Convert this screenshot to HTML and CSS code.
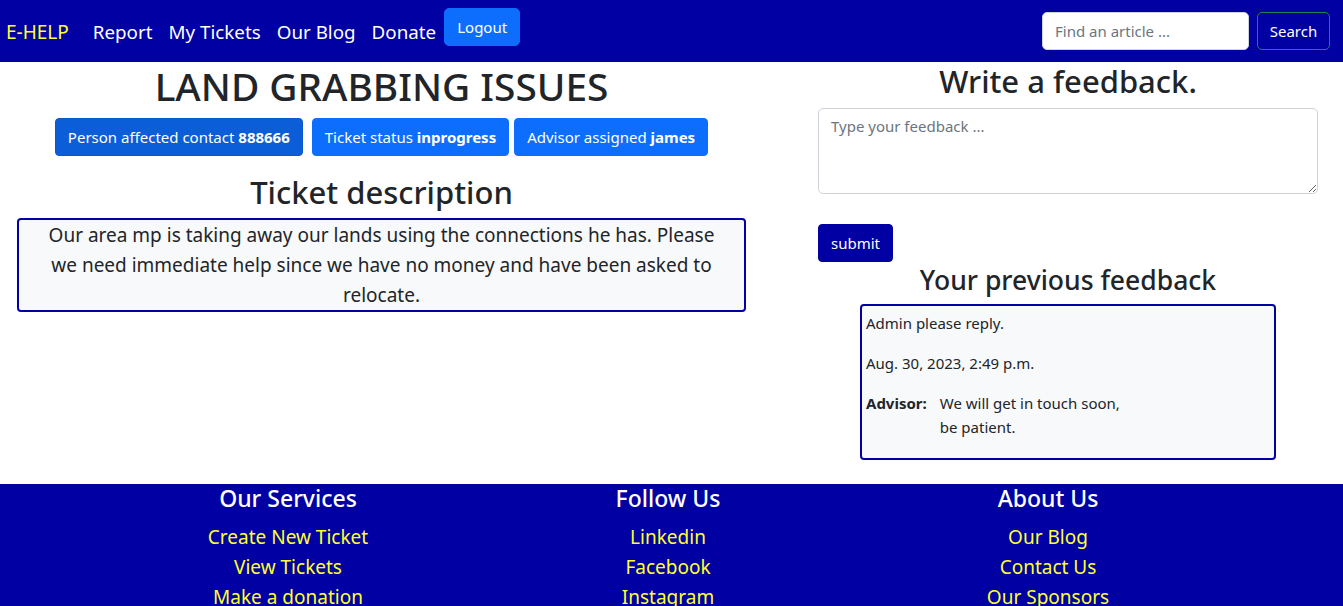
FILE: index.html
```html
<!DOCTYPE html>
<html lang="en">
<head>
<meta charset="utf-8">
<title>E-HELP - Ticket</title>
<link rel="stylesheet" href="styles.css">
</head>
<body>
<nav class="navbar">
  <a class="brand" href="#">E-HELP</a>
  <ul class="nav-links">
    <li><a href="#">Report</a></li>
    <li><a href="#">My Tickets</a></li>
    <li><a href="#">Our Blog</a></li>
    <li><a href="#">Donate</a></li>
  </ul>
  <button class="btn-logout" type="button">Logout</button>
  <form class="search">
    <input class="search-input" type="search" placeholder="Find an article ...">
    <button class="btn-search" type="button">Search</button>
  </form>
</nav>

<main class="main">
  <section class="ticket">
    <h1 class="ticket-title">LAND GRABBING ISSUES</h1>
    <div class="badges">
      <button class="badge badge-dark" type="button">Person affected contact <b>888666</b></button>
      <button class="badge badge-mid" type="button">Ticket status <b>inprogress</b></button>
      <button class="badge" type="button">Advisor assigned <b>james</b></button>
    </div>
    <h2 class="section-title desc-title">Ticket description</h2>
    <p class="description">Our area mp is taking away our lands using the connections he has. Please we need immediate help since we have no money and have been asked to relocate.</p>
  </section>

  <section class="feedback">
    <h2 class="section-title">Write a feedback.</h2>
    <form class="feedback-form">
      <textarea class="feedback-input" rows="3" placeholder="Type your feedback ..."></textarea>
      <button class="btn-submit" type="button">submit</button>
    </form>
    <h3 class="prev-title">Your previous feedback</h3>
    <div class="prev-card">
      <p>Admin please reply.</p>
      <p>Aug. 30, 2023, 2:49 p.m.</p>
      <div class="reply">
        <b class="reply-label">Advisor:</b>
        <span class="reply-text">We will get in touch soon, be patient.</span>
      </div>
    </div>
  </section>
</main>

<footer class="footer">
  <div class="footer-inner">
    <div class="footer-col">
      <h4>Our Services</h4>
      <a href="#">Create New Ticket</a>
      <a href="#">View Tickets</a>
      <a href="#">Make a donation</a>
    </div>
    <div class="footer-col">
      <h4>Follow Us</h4>
      <a href="#">Linkedin</a>
      <a href="#">Facebook</a>
      <a href="#">Instagram</a>
    </div>
    <div class="footer-col">
      <h4>About Us</h4>
      <a href="#">Our Blog</a>
      <a href="#">Contact Us</a>
      <a href="#">Our Sponsors</a>
    </div>
  </div>
</footer>
</body>
</html>
```

FILE: styles.css
```css
* { box-sizing: border-box; }

html, body {
  margin: 0;
  padding: 0;
}

body {
  font-family: "Noto Sans", "Open Sans", "Liberation Sans", sans-serif;
  font-size: 16px;
  line-height: 1.5;
  color: #212529;
  background: #fff;
  overflow: hidden;
}

a { text-decoration: none; }

/* ---------- navbar ---------- */
.navbar {
  display: flex;
  align-items: center;
  height: 62px;
  padding: 0 13px 0 6px;
  background: #0000a3;
}

.brand {
  color: #ffff33;
  font-size: 19px;
  line-height: 30px;
  margin-right: 16px;
  margin-top: 2px;
}

.nav-links {
  display: flex;
  list-style: none;
  margin: 0;
  padding: 0;
  margin-top: 2px;
}

.nav-links a {
  display: block;
  padding: 8px 8px;
  color: #fff;
  font-size: 18.8px;
  line-height: 24px;
}

.btn-logout {
  align-self: flex-start;
  margin-top: 8px;
  margin-left: 0;
  height: 38px;
  padding: 0 12px;
  font: inherit;
  font-size: 15px;
  color: #fff;
  background: #0d6efd;
  border: 1px solid #0d6efd;
  border-radius: 5px;
}

.search {
  display: flex;
  margin-left: auto;
  gap: 8px;
}

.search-input {
  width: 207px;
  height: 38px;
  padding: 6px 12px;
  font: inherit;
  font-size: 15px;
  color: #212529;
  background: #fff;
  border: 1px solid #ced4da;
  border-radius: 5px;
  outline: none;
}

.search-input::placeholder { color: #6c757d; }

.btn-search {
  width: 73px;
  height: 38px;
  padding: 0;
  font: inherit;
  font-size: 15px;
  color: #fff;
  background: transparent;
  border: 1px solid #198754;
  border-radius: 5px;
}

/* ---------- main ---------- */
.main {
  display: flex;
  gap: 72px;
  padding: 0 25px 0 17px;
}

.ticket {
  flex: 0 0 729px;
  text-align: center;
}

.feedback {
  flex: 0 0 500px;
}

.ticket-title {
  margin: 0 0 8px;
  font-size: 38.8px;
  font-weight: 500;
  line-height: 48px;
}

.badges {
  display: flex;
  justify-content: center;
}

.badge {
  height: 38px;
  padding: 0 12px;
  font: inherit;
  font-size: 15px;
  color: #fff;
  background: #0d6efd;
  border: 1px solid #0d6efd;
  border-radius: 4px;
}

.badge b { font-weight: 700; }

.badge-dark {
  background: #0b5ed7;
  border-color: #0a58ca;
  margin-right: 9px;
}

.badge-mid { margin-right: 5px; }

.section-title {
  margin: 0 0 8px;
  font-size: 31px;
  font-weight: 500;
  line-height: 38px;
  text-align: center;
}

.desc-title { margin-top: 17px; margin-bottom: 7px; }

.description {
  margin: 0;
  padding: 0 20px;
  font-size: 19px;
  line-height: 30px;
  text-align: center;
  background: #f8f9fa;
  border: 2px solid #0000a3;
  border-radius: 4px;
}

.feedback-form {
  display: flex;
  flex-direction: column;
  align-items: flex-start;
}

.feedback-input {
  display: block;
  width: 100%;
  height: 86px;
  padding: 6px 12px;
  font: inherit;
  font-size: 15px;
  color: #212529;
  border: 1px solid #ced4da;
  border-radius: 5px;
  resize: vertical;
  outline: none;
}

.feedback-input::placeholder { color: #6c757d; }

.btn-submit {
  margin-top: 30px;
  height: 38px;
  padding: 0 12px;
  font: inherit;
  font-size: 15px;
  color: #fff;
  background: #0000a3;
  border: 1px solid #0000a3;
  border-radius: 4px;
}

.prev-title {
  margin: 2px 0 8px;
  font-size: 26.5px;
  font-weight: 500;
  line-height: 32px;
  text-align: center;
}

.prev-card {
  width: 416px;
  margin: 0 auto 24px;
  padding: 5px 4px 3px;
  font-size: 15px;
  line-height: 24px;
  background: #f8f9fa;
  border: 2px solid #0000a3;
  border-radius: 4px;
}

.prev-card p {
  margin: 0 0 16px;
}

.reply {
  display: flex;
  gap: 13px;
  margin-bottom: 16px;
}

.reply-label { font-weight: 700; }

.reply-text { width: 200px; }

/* ---------- footer ---------- */
.footer {
  background: #0000a3;
  height: 200px;
}

.footer-inner {
  display: flex;
  padding-left: 98px;
}

.footer-col {
  flex: 0 0 380px;
  display: flex;
  flex-direction: column;
  align-items: center;
}

.footer-col h4 {
  margin: 0 0 9px;
  font-size: 23px;
  font-weight: 500;
  line-height: 29px;
  color: #fff;
}

.footer-col a {
  color: #ffff33;
  font-size: 19px;
  line-height: 30px;
}
```
